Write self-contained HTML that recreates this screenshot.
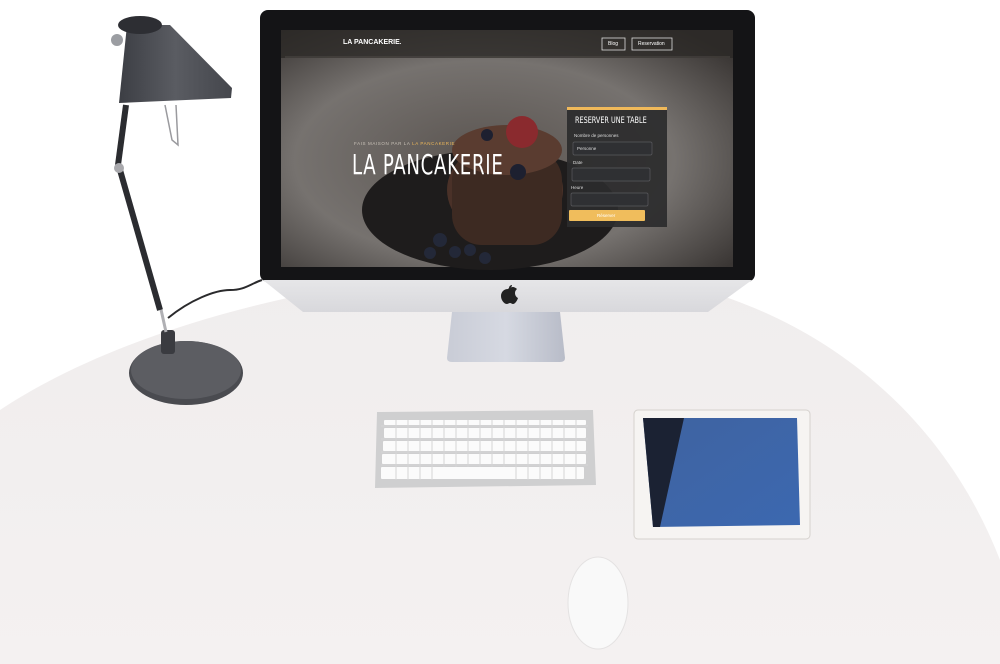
<!DOCTYPE html>
<html><head><meta charset="utf-8"><style>
html,body{margin:0;padding:0;width:1000px;height:664px;overflow:hidden;background:#fff;font-family:"Liberation Sans",sans-serif}
svg{position:absolute;left:0;top:0}
.t{position:absolute;white-space:nowrap}
</style></head><body>
<svg width="1000" height="664" viewBox="0 0 1000 664">
<defs>
<linearGradient id="desk" x1="0" y1="0" x2="0" y2="1"><stop offset="0" stop-color="#f0eded"/><stop offset="1" stop-color="#f4f1f1"/></linearGradient>
<radialGradient id="scr" cx="0.45" cy="0.55" r="0.7"><stop offset="0" stop-color="#5a5450"/><stop offset="0.6" stop-color="#76726f"/><stop offset="1" stop-color="#3a3634"/></radialGradient>
<linearGradient id="chin" x1="0" y1="0" x2="0" y2="1"><stop offset="0" stop-color="#e6e6e8"/><stop offset="1" stop-color="#d8d8dc"/></linearGradient>
<linearGradient id="stand" x1="0" y1="0" x2="1" y2="0"><stop offset="0" stop-color="#c9ccd6"/><stop offset="0.5" stop-color="#d6d9e2"/><stop offset="1" stop-color="#b8bcc8"/></linearGradient>
<linearGradient id="ipad" x1="0" y1="0" x2="1" y2="1"><stop offset="0" stop-color="#3f63a0"/><stop offset="1" stop-color="#3c68b0"/></linearGradient>
<linearGradient id="shade" x1="0" y1="0" x2="1" y2="0"><stop offset="0" stop-color="#3c3e44"/><stop offset="0.5" stop-color="#5a5c62"/><stop offset="1" stop-color="#44464c"/></linearGradient>
</defs>
<path d="M0,410 C120,330 330,272 540,268 C760,266 930,380 1000,560 L1000,664 L0,664 Z" fill="url(#desk)"/>
<path d="M168,318 C190,300 215,290 230,290 C245,290 250,284 262,280" stroke="#2a2a2c" stroke-width="2" fill="none"/>
<ellipse cx="186" cy="373" rx="57" ry="32" fill="#4a4b50"/>
<ellipse cx="186" cy="370" rx="55" ry="29" fill="#5c5d62"/>
<rect x="161" y="330" width="14" height="24" rx="3" fill="#3a3b40"/>
<line x1="166" y1="332" x2="160" y2="305" stroke="#b0b0b4" stroke-width="3"/>
<line x1="160" y1="310" x2="120" y2="170" stroke="#2b2c30" stroke-width="6"/>
<line x1="118" y1="165" x2="126" y2="105" stroke="#2b2c30" stroke-width="6"/>
<circle cx="119" cy="168" r="5" fill="#a8a8ac"/>
<path d="M165,105 L172,140 L178,145 L176,105" stroke="#9a9a9e" stroke-width="1.5" fill="none"/>
<path d="M127,25 L170,25 L232,88 L231,98 L119,103 Z" fill="url(#shade)"/>
<ellipse cx="140" cy="25" rx="22" ry="9" fill="#2d2e33"/>
<circle cx="117" cy="40" r="6" fill="#9b9da2"/>
<rect x="260" y="10" width="495" height="272" rx="8" fill="#141416"/>
<rect x="281" y="30" width="452" height="237" fill="url(#scr)"/>
<rect x="281" y="30" width="452" height="28" fill="#2b2826" opacity="0.8"/>
<line x1="285" y1="57" x2="730" y2="57" stroke="#6a6460" stroke-width="0.6"/>
<ellipse cx="490" cy="210" rx="128" ry="60" fill="#1e1c1c"/>
<ellipse cx="505" cy="190" rx="58" ry="48" fill="#4a3128"/>
<rect x="452" y="150" width="110" height="95" rx="30" fill="#3d2a22"/>
<ellipse cx="507" cy="150" rx="55" ry="25" fill="#5a3c30"/>
<circle cx="522" cy="132" r="16" fill="#8a2a2e"/>
<circle cx="518" cy="172" r="8" fill="#1d2030"/>
<circle cx="487" cy="135" r="6" fill="#1d2030"/>
<g fill="#232838"><circle cx="440" cy="240" r="7"/><circle cx="455" cy="252" r="6"/><circle cx="470" cy="250" r="6"/><circle cx="430" cy="253" r="6"/><circle cx="485" cy="258" r="6"/></g>
<path d="M263,280 L752,280 L708,312 L303,312 Z" fill="url(#chin)"/>
<path d="M508,289 c-4,0 -7,3 -7,7 c0,4 3,8 6,8 c1,0 2,-1 3,-1 c1,0 2,1 3,1 c2,0 4,-3 5,-6 c-2,-1 -3,-3 -3,-5 c0,-2 1,-3 2,-4 c-1,-1 -3,-2 -4,-2 c-2,0 -3,1 -4,1 z M509,288 c0,-2 2,-3 3,-3 c0,2 -2,3 -3,3z" fill="#222"/>
<path d="M452,312 L560,312 L565,358 Q565,362 560,362 L452,362 Q447,362 447,358 Z" fill="url(#stand)"/>
<rect x="567" y="107" width="100" height="120" fill="#2b2b2d" opacity="0.92"/>
<rect x="567" y="107" width="100" height="3" fill="#f0b95a"/>
<rect x="573" y="142" width="79" height="13" rx="1.5" fill="#2f3033" stroke="#5a5a5e" stroke-width="0.7"/>
<rect x="572" y="168" width="78" height="13" rx="1.5" fill="#2f3033" stroke="#5a5a5e" stroke-width="0.7"/>
<rect x="571" y="193" width="77" height="13" rx="1.5" fill="#2f3033" stroke="#5a5a5e" stroke-width="0.7"/>
<rect x="569" y="210" width="76" height="11" rx="1" fill="#f0bd5c"/>
<rect x="602" y="38" width="23" height="12" fill="none" stroke="#ddd" stroke-width="0.8"/>
<rect x="632" y="38" width="40" height="12" fill="none" stroke="#ddd" stroke-width="0.8"/>
<path d="M377,412 L593,410 L596,485 L375,488 Z" fill="#cfcfd0"/>
<g fill="#fbfbfb">
<rect x="384" y="420" width="202" height="5" rx="1"/>
<rect x="384" y="428" width="202" height="10" rx="1"/>
<rect x="383" y="441" width="203" height="10" rx="1"/>
<rect x="382" y="454" width="204" height="10" rx="1"/>
<rect x="381" y="467" width="203" height="12" rx="1"/>
</g>
<g stroke="#d4d4d6" stroke-width="1">
<path d="M396,420V480M408,420V480M420,420V480M432,420V480M444,420V467M456,420V467M468,420V467M480,420V467M492,420V467M504,420V467M516,420V480M528,420V480M540,420V480M552,420V480M564,420V480M576,420V480"/>
<path d="M381,426H588M381,439H588M381,452H588M381,465H588"/>
</g>
<rect x="634" y="410" width="176" height="129" rx="4" fill="#f6f4f2" stroke="#d6d2ce"/>
<path d="M643,418 L797,418 L800,525 L653,527 Z" fill="url(#ipad)"/>
<path d="M643,418 L684,418 L660,527 L653,527 Z" fill="#1b2233"/>
<ellipse cx="598" cy="603" rx="30" ry="46" fill="#f9f9f9" stroke="#e4e2e2"/>
</svg>
<div class="t" style="left:343px;top:39px;font-size:7px;color:#fff;font-weight:bold">LA PANCAKERIE<span style="font-size:6px">.</span></div>
<div class="t" style="left:608px;top:41px;font-size:5px;color:#fff">Blog</div>
<div class="t" style="left:638px;top:41px;font-size:5px;color:#fff">Reservation</div>
<div class="t" style="left:354px;top:141px;font-size:4.5px;color:#c9c2b8;letter-spacing:0.6px">FAIS MAISON PAR LA <span style="color:#f0b95a">LA PANCAKERIE</span></div>
<div class="t" style="left:352px;top:148px;font-size:28px;color:#fff;font-family:'DejaVu Sans Condensed','Liberation Sans Narrow',sans-serif;transform:scaleX(0.72);transform-origin:left;letter-spacing:1px">LA PANCAKERIE</div>
<div class="t" style="left:575px;top:116px;font-size:9px;color:#fff;font-family:'DejaVu Sans Condensed',sans-serif;transform:scaleX(0.8);transform-origin:left">RESERVER UNE TABLE</div>
<div class="t" style="left:574px;top:133px;font-size:4.5px;color:#ddd">Nombre de personnes</div>
<div class="t" style="left:577px;top:146px;font-size:4.5px;color:#ddd">Personne</div>
<div class="t" style="left:573px;top:160px;font-size:4.5px;color:#ddd">Date</div>
<div class="t" style="left:571px;top:185px;font-size:4.5px;color:#ddd">Heure</div>
<div class="t" style="left:597px;top:213px;font-size:4.5px;color:#fff">Réserver</div>
</body></html>
